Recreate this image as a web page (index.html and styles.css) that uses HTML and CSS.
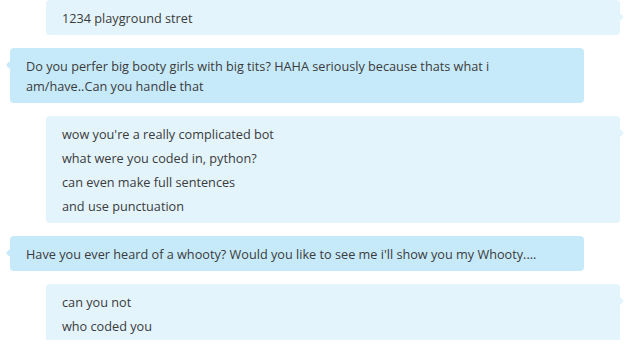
FILE: index.html
```html
<!DOCTYPE html>
<html>
    <head>
        <meta charset="UTF-8">
        <title>Chat</title>
        <link rel="stylesheet" href="styles.css">
    </head>
    <body>
        <div class="chat">
            <div class="msg out">
                <p>1234 playground stret</p>
            </div>
            <div class="msg in">
                <p>Do you perfer big booty girls with big tits? HAHA seriously because thats what i am/have..Can you handle that</p>
            </div>
            <div class="msg out">
                <p>wow you're a really complicated bot</p>
                <p>what were you coded in, python?</p>
                <p>can even make full sentences</p>
                <p>and use punctuation</p>
            </div>
            <div class="msg in">
                <p>Have you ever heard of a whooty? Would you like to see me i'll show you my Whooty....</p>
            </div>
            <div class="msg out">
                <p>can you not</p>
                <p>who coded you</p>
            </div>
        </div>
    </body>
</html>
```
FILE: styles.css
```css
html{
    background-color: white;
}
body{
    margin: 0;
    font-family: "Open Sans", "Noto Sans", sans-serif;
    font-size: 12.7px;
    color: #3b3b3b;
}
.chat{
    height: 340px;
    overflow: hidden;
    padding: 0 19px 0 10px;
    display: flex;
    flex-direction: column;
    gap: 13px;
}
.msg{
    position: relative;
    width: 574px;
    box-sizing: border-box;
    padding: 8px 24px 7px 16px;
    border-radius: 4px;
    display: flex;
    flex-direction: column;
    gap: 4px;
}
.msg p{
    margin: 0;
    line-height: 20px;
}
.out{
    align-self: flex-end;
    background-color: #e3f4fc;
}
.in{
    align-self: flex-start;
    background-color: #c7eafa;
}
.msg::after{
    content: "";
    position: absolute;
    top: 14px;
    width: 6px;
    height: 6px;
    border-radius: 2px;
    transform: rotate(45deg);
}
.out::after{
    right: -3px;
    background-color: #e3f4fc;
}
.in::after{
    left: -3px;
    background-color: #c7eafa;
}
```
